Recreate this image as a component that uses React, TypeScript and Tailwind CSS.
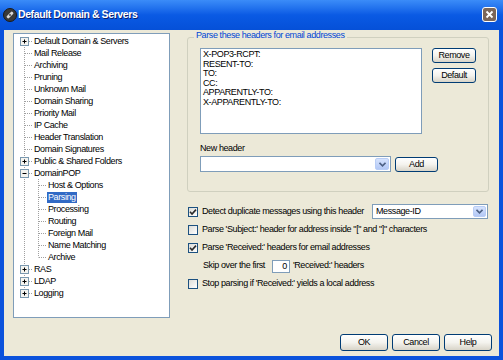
import React from 'react'

type TreeNode = {
  label: string
  depth: 0 | 1
  kind: 'plus' | 'minus' | 'leaf'
  selected?: boolean
  first?: boolean
  last?: boolean
  lastChild?: boolean
}

const tree: TreeNode[] = [
  { label: 'Default Domain & Servers', depth: 0, kind: 'plus', first: true },
  { label: 'Mail Release', depth: 0, kind: 'leaf' },
  { label: 'Archiving', depth: 0, kind: 'leaf' },
  { label: 'Pruning', depth: 0, kind: 'leaf' },
  { label: 'Unknown Mail', depth: 0, kind: 'leaf' },
  { label: 'Domain Sharing', depth: 0, kind: 'leaf' },
  { label: 'Priority Mail', depth: 0, kind: 'leaf' },
  { label: 'IP Cache', depth: 0, kind: 'leaf' },
  { label: 'Header Translation', depth: 0, kind: 'leaf' },
  { label: 'Domain Signatures', depth: 0, kind: 'leaf' },
  { label: 'Public & Shared Folders', depth: 0, kind: 'plus' },
  { label: 'DomainPOP', depth: 0, kind: 'minus' },
  { label: 'Host & Options', depth: 1, kind: 'leaf' },
  { label: 'Parsing', depth: 1, kind: 'leaf', selected: true },
  { label: 'Processing', depth: 1, kind: 'leaf' },
  { label: 'Routing', depth: 1, kind: 'leaf' },
  { label: 'Foreign Mail', depth: 1, kind: 'leaf' },
  { label: 'Name Matching', depth: 1, kind: 'leaf' },
  { label: 'Archive', depth: 1, kind: 'leaf', lastChild: true },
  { label: 'RAS', depth: 0, kind: 'plus' },
  { label: 'LDAP', depth: 0, kind: 'plus' },
  { label: 'Logging', depth: 0, kind: 'plus', last: true },
]

const headers = ['X-POP3-RCPT:', 'RESENT-TO:', 'TO:', 'CC:', 'APPARENTLY-TO:', 'X-APPARENTLY-TO:']

function Connector({ node }: { node: TreeNode }) {
  const w = node.depth === 0 ? 19 : 33
  const dots = { stroke: '#a0a0a0', strokeDasharray: '1 1', strokeWidth: 1 }
  return (
    <svg width={w} height={12} className="shrink-0">
      {/* main trunk */}
      <line x1={10.5} x2={10.5} y1={node.first ? 6 : 0} y2={node.last ? 6 : 12} {...dots} />
      {node.depth === 0 && <line x1={11} x2={18} y1={6.5} y2={6.5} {...dots} />}
      {node.depth === 1 && (
        <>
          <line x1={24.5} x2={24.5} y1={0} y2={node.lastChild ? 6.5 : 12} {...dots} />
          <line x1={25} x2={32} y1={6.5} y2={6.5} {...dots} />
        </>
      )}
      {node.kind !== 'leaf' && (
        <g>
          <rect x={6.5} y={2.5} width={8} height={8} fill="#f4f4f0" stroke="#7a98af" />
          <line x1={8.5} x2={12.5} y1={6.5} y2={6.5} stroke="#000" />
          {node.kind === 'plus' && <line x1={10.5} x2={10.5} y1={4.5} y2={8.5} stroke="#000" />}
        </g>
      )}
    </svg>
  )
}

function XpButton({ children, className = '' }: { children: React.ReactNode; className?: string }) {
  return (
    <button
      className={`flex items-center justify-center border border-[#003c74] rounded-[3px] bg-gradient-to-b from-white via-[#f4f3ee] to-[#d8d4c8] text-black leading-none ${className}`}
    >
      {children}
    </button>
  )
}

function DropArrow({ className = '' }: { className?: string }) {
  return (
    <div className={`flex items-center justify-center rounded-[2px] bg-gradient-to-b from-[#d6e3fd] to-[#b3c8f5] border border-[#b8cdf6] ${className}`}>
      <svg width="7" height="5" viewBox="0 0 7 5">
        <path d="M0.5 0.8 L3.5 3.8 L6.5 0.8" fill="none" stroke="#4d6185" strokeWidth="1.6" />
      </svg>
    </div>
  )
}

function Check({ checked }: { checked?: boolean }) {
  return (
    <div className="w-[10px] h-[10px] shrink-0 border border-[#1c5180] bg-gradient-to-br from-[#dcdcd7] to-white flex items-center justify-center">
      {checked && (
        <svg width="8" height="8" viewBox="0 0 8 8">
          <path d="M1 3.8 L3 6 L7 1.6" fill="none" stroke="#2a2a2a" strokeWidth="1.6" />
        </svg>
      )}
    </div>
  )
}

export default function App() {
  return (
    <div className="w-[503px] h-[360px] flex flex-col overflow-hidden bg-[#0b52dc] font-['Liberation_Sans',Arial,sans-serif] text-[9px] tracking-[-0.4px] text-black">
      {/* Title bar */}
      <div className="h-[30px] shrink-0 flex items-center pl-[3px] pr-[6px] bg-gradient-to-b from-[#3b8cf8] via-[#0a5ae4] to-[#0550d8]">
        <svg width="14" height="14" viewBox="0 0 14 14" className="shrink-0">
          <circle cx="7" cy="7" r="6.5" fill="#3a3a3a" stroke="#1a1a1a" />
          <rect x="3" y="5.5" width="8" height="3" rx="1.2" fill="#d8d8d8" transform="rotate(-45 7 7)" />
          <circle cx="7" cy="7" r="0.9" fill="#3a3a3a" />
        </svg>
        <span className="ml-[1px] text-white font-bold text-[10.5px] tracking-[-0.4px] [text-shadow:1px_1px_0_#0a1f6e] whitespace-nowrap">
          Default Domain &amp; Servers
        </span>
        <div className="ml-auto mt-[-1px] w-[15px] h-[15px] rounded-[3px] border border-white bg-[#7b6659] flex items-center justify-center">
          <svg width="9" height="9" viewBox="0 0 9 9">
            <path d="M1.5 1.5 L7.5 7.5 M7.5 1.5 L1.5 7.5" stroke="#fff" strokeWidth="1.8" />
          </svg>
        </div>
      </div>

      {/* Client area */}
      <div className="flex-1 mx-[4px] mb-[4px] bg-[#ece9d8] flex flex-col pt-[3px] pl-[9px]">
        <div className="flex">
          {/* Tree */}
          <div className="w-[157px] h-[285px] shrink-0 bg-white border border-[#7f9db9] pt-[1px]">
            {tree.map((n) => (
              <div key={n.label} className="flex items-center h-[12px]">
                <Connector node={n} />
                <span
                  className={`px-[1px] h-[11px] leading-[11px] whitespace-nowrap ${
                    n.selected ? 'bg-[#316ac5] text-white' : ''
                  }`}
                >
                  {n.label}
                </span>
              </div>
            ))}
          </div>

          {/* Right side */}
          <div className="ml-[17px] pt-[4px] w-[302px] flex flex-col">
            <div className="relative h-[155px] border border-[#d0d0bf] rounded-[3px] pt-[10px] pl-[12px]">
              <span className="absolute -top-[8px] left-[6px] px-[2px] bg-[#ece9d8] text-[#0046d5] leading-[11px] whitespace-nowrap">
                Parse these headers for email addresses
              </span>
              <div className="flex">
                <div className="w-[222px] h-[86px] bg-white border border-[#7f9db9] pl-[2px] pt-[1px]">
                  {headers.map((h) => (
                    <div key={h} className="leading-[9.6px] h-[9.6px] whitespace-nowrap">
                      {h}
                    </div>
                  ))}
                </div>
                <div className="ml-[10px] flex flex-col gap-[5px]">
                  <XpButton className="w-[44px] h-[15px]">Remove</XpButton>
                  <XpButton className="w-[44px] h-[15px]">Default</XpButton>
                </div>
              </div>
              <div className="mt-[8px] leading-[12px]">New header</div>
              <div className="mt-[2px] flex items-center">
                <div className="w-[191px] h-[16px] bg-white border border-[#7f9db9] flex justify-end p-[1px]">
                  <DropArrow className="w-[14px] h-full" />
                </div>
                <XpButton className="ml-[4px] mt-[1px] w-[43px] h-[15px]">Add</XpButton>
              </div>
            </div>

            {/* Options */}
            <div className="mt-[10px] h-[19px] flex items-center pl-[1px] whitespace-nowrap">
              <Check checked />
              <span className="ml-[4px]">Detect duplicate messages using this header</span>
              <div className="ml-auto mr-[1px] w-[116px] h-[15px] bg-white border border-[#7f9db9] flex items-center p-[1px]">
                <span className="pl-[2px] flex-1 leading-none">Message-ID</span>
                <DropArrow className="w-[13px] h-full" />
              </div>
            </div>
            <div className="h-[17px] flex items-center pl-[1px] whitespace-nowrap">
              <Check />
              <span className="ml-[4px]">Parse 'Subject:' header for address inside "[" and "]" characters</span>
            </div>
            <div className="h-[19px] flex items-center pl-[1px] whitespace-nowrap">
              <Check checked />
              <span className="ml-[4px]">Parse 'Received:' headers for email addresses</span>
            </div>
            <div className="h-[18px] flex items-center pl-[16px] whitespace-nowrap">
              <span>Skip over the first</span>
              <div className="ml-[7px] w-[18px] h-[13px] bg-white border border-[#7f9db9] flex items-center justify-end pr-[2px] leading-none">
                0
              </div>
              <span className="ml-[3px]">'Received:' headers</span>
            </div>
            <div className="h-[18px] flex items-center pl-[1px] whitespace-nowrap">
              <Check />
              <span className="ml-[4px]">Stop parsing if 'Received:' yields a local address</span>
            </div>
          </div>
        </div>

        {/* Bottom buttons */}
        <div className="mt-auto mb-[5px] mr-[7px] flex justify-end gap-[4px]">
          <XpButton className="w-[48px] h-[17px]">OK</XpButton>
          <XpButton className="w-[48px] h-[17px]">Cancel</XpButton>
          <XpButton className="w-[48px] h-[17px]">Help</XpButton>
        </div>
      </div>
    </div>
  )
}
